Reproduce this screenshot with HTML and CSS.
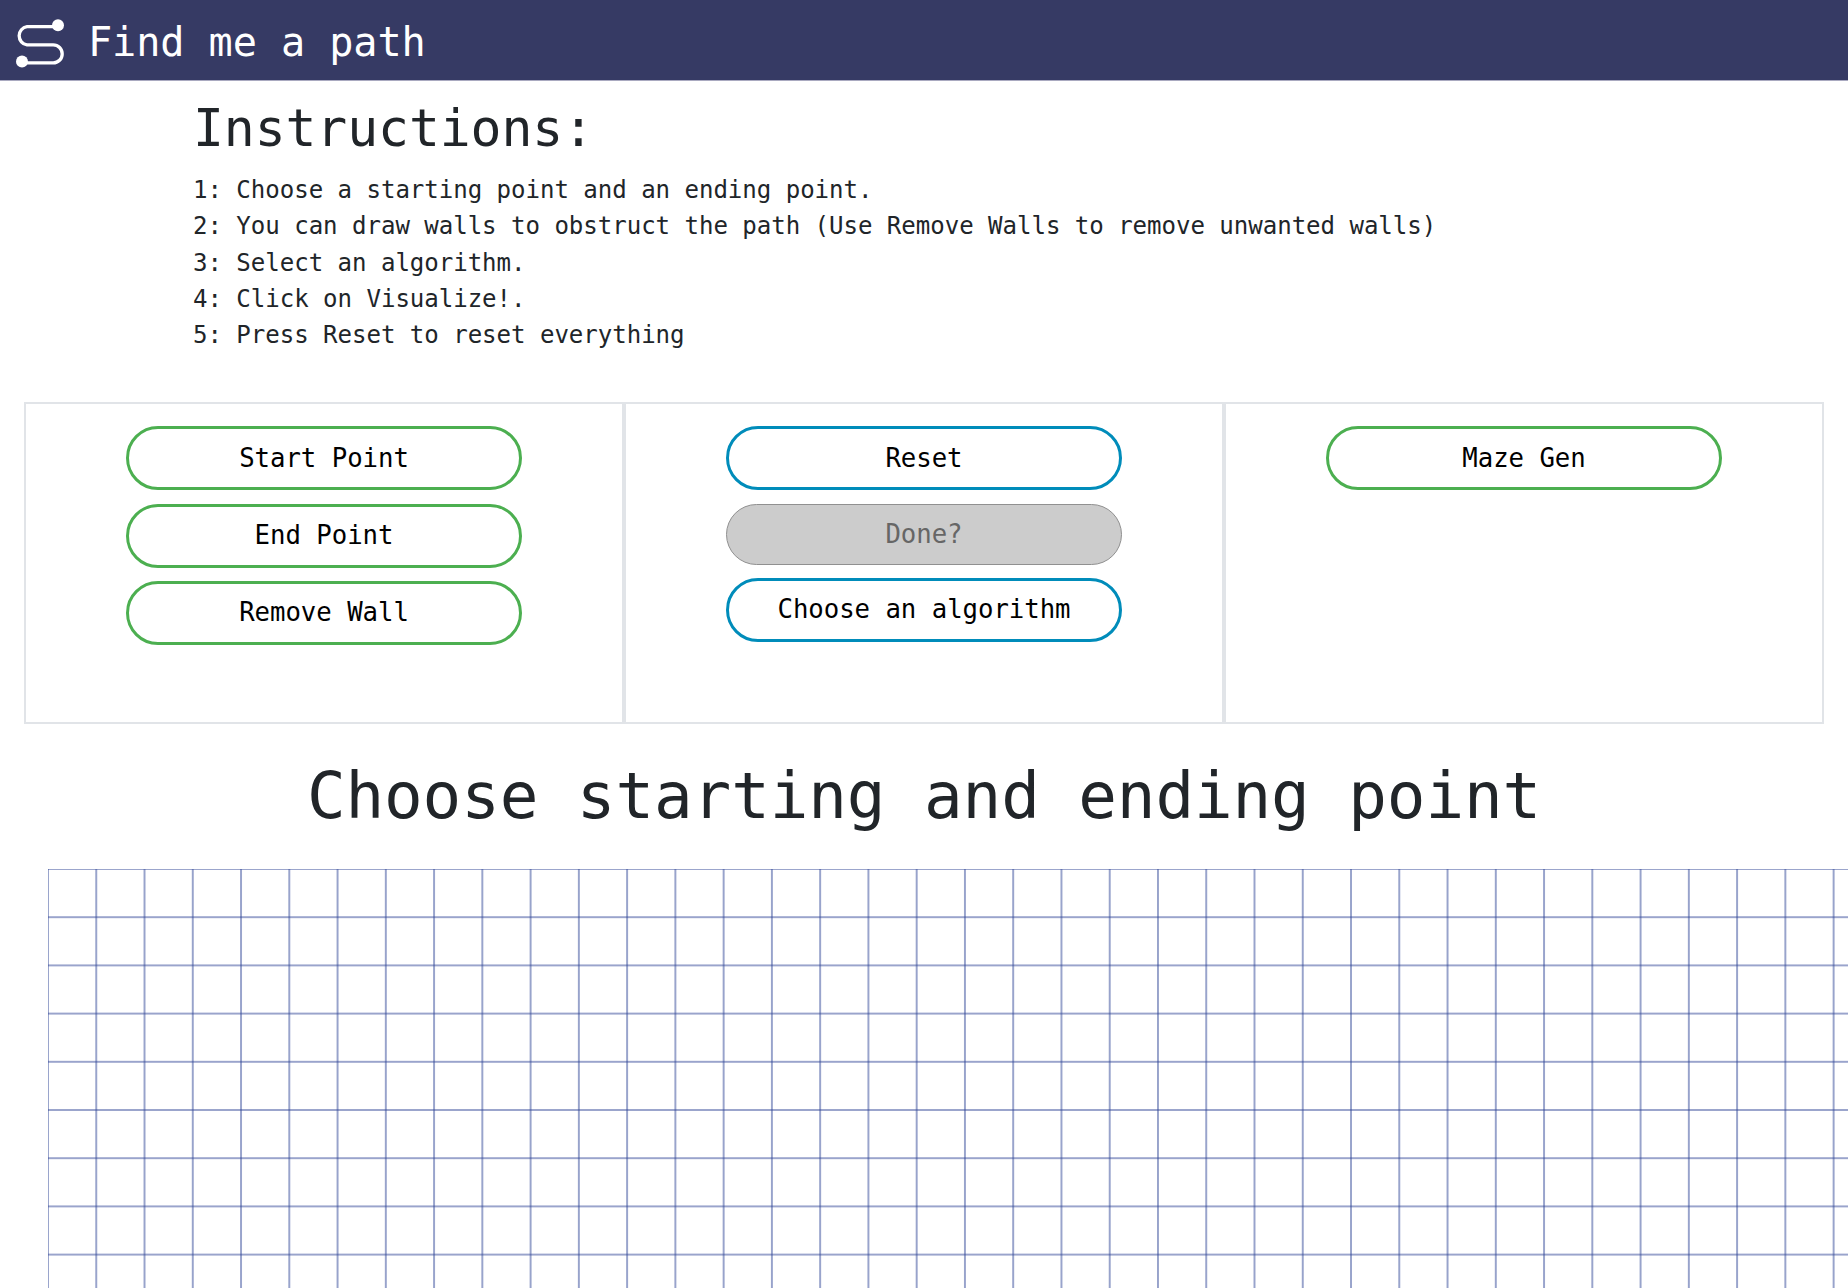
FILE: index.html
```html
<!DOCTYPE html>
<html lang="en">
<head>
<meta charset="utf-8">
<title>Find me a path</title>
<link rel="stylesheet" href="styles.css">
</head>
<body>
<header class="navbar">
  <svg class="logo" viewBox="0 0 48 49" aria-hidden="true">
    <path d="M42 7.7H11a9.2 9.2 0 0 0 0 18.2H37.2a9 9 0 0 1 0 18H6" fill="none" stroke="#fff" stroke-width="3.3"/>
    <circle cx="42" cy="6.2" r="6" fill="#fff"/>
    <circle cx="6" cy="42.4" r="6" fill="#fff"/>
  </svg>
  <span class="brand">Find me a path</span>
</header>
<main>
  <section class="instructions">
    <h1 class="title">Instructions:</h1>
    <p class="step">1: Choose a starting point and an ending point.</p>
    <p class="step">2: You can draw walls to obstruct the path (Use Remove Walls to remove unwanted walls)</p>
    <p class="step">3: Select an algorithm.</p>
    <p class="step">4: Click on Visualize!.</p>
    <p class="step">5: Press Reset to reset everything</p>
  </section>
  <section class="controls">
    <div class="column">
      <button class="btn green">Start Point</button>
      <button class="btn green">End Point</button>
      <button class="btn green">Remove Wall</button>
    </div>
    <div class="column">
      <button class="btn blue">Reset</button>
      <button class="btn disabled" disabled>Done?</button>
      <button class="btn blue">Choose an algorithm</button>
    </div>
    <div class="column">
      <button class="btn green">Maze Gen</button>
    </div>
  </section>
  <h2 class="status">Choose starting and ending point</h2>
  <svg class="board" aria-hidden="true">
    <defs>
      <pattern id="cell" width="48.26" height="48.2" patternUnits="userSpaceOnUse">
        <path d="M0 0V48.2M48.26 0V48.2" stroke="#2f4596" stroke-opacity=".65" stroke-width="1.5"/>
        <path d="M0 0H48.26M0 48.2H48.26" stroke="#2f4596" stroke-opacity=".65" stroke-width="1.5"/>
      </pattern>
    </defs>
    <rect width="100%" height="100%" fill="url(#cell)"/>
  </svg>
</main>
</body>
</html>
```
FILE: styles.css
```css
* { box-sizing: border-box; }
html { overflow: hidden; }
body {
  margin: 0;
  height: 1288px;
  overflow: hidden;
  background: #fff;
  color: #212529;
  font-family: "DejaVu Sans Mono", "Liberation Mono", monospace;
}
.navbar {
  display: flex;
  align-items: center;
  height: 81px;
  padding-left: 16px;
  border-bottom: 1px solid #a9a9c0;
  background: #363a64;
  color: #fff;
}
.logo { width: 48px; height: 49px; margin-top: 7px; }
.brand {
  margin: 3px 0 0 24px;
  font-size: 40.2px;
  line-height: 60px;
  letter-spacing: -0.08px;
}
.instructions { padding: 16px 0 0 193px; height: 321px; }
.title {
  margin: 0 0 13px;
  font-size: 51.4px;
  font-weight: 400;
  line-height: 62px;
  letter-spacing: -0.1px;
}
.step {
  margin: 0;
  font-size: 24.1px;
  line-height: 36.3px;
  letter-spacing: -0.05px;
}
.controls {
  display: grid;
  grid-template-columns: repeat(3, 1fr);
  height: 322px;
  margin: 0 24px;
}
.column {
  display: flex;
  flex-direction: column;
  align-items: center;
  gap: 13.25px;
  padding-top: 22.3px;
  border: 2px solid #e1e4e8;
}
.btn {
  width: 395.5px;
  height: 64px;
  padding: 0 0 1px;
  border: 3px solid;
  border-radius: 32px;
  background: #fff;
  color: #000;
  font: 25.7px/38px "DejaVu Sans Mono", "Liberation Mono", monospace;
  letter-spacing: -0.04px;
}
.green { border-color: #4caf50; }
.blue { border-color: #008cba; }
.disabled {
  height: 61px;
  border: 1px solid #909090;
  background: #ccc;
  color: #666;
}
.status {
  margin: 33px 0 0;
  height: 112px;
  font-size: 64.3px;
  font-weight: 400;
  line-height: 78px;
  letter-spacing: -0.14px;
  text-align: center;
}
.board { display: block; width: 1800px; height: 420px; margin-left: 48px; }
```
